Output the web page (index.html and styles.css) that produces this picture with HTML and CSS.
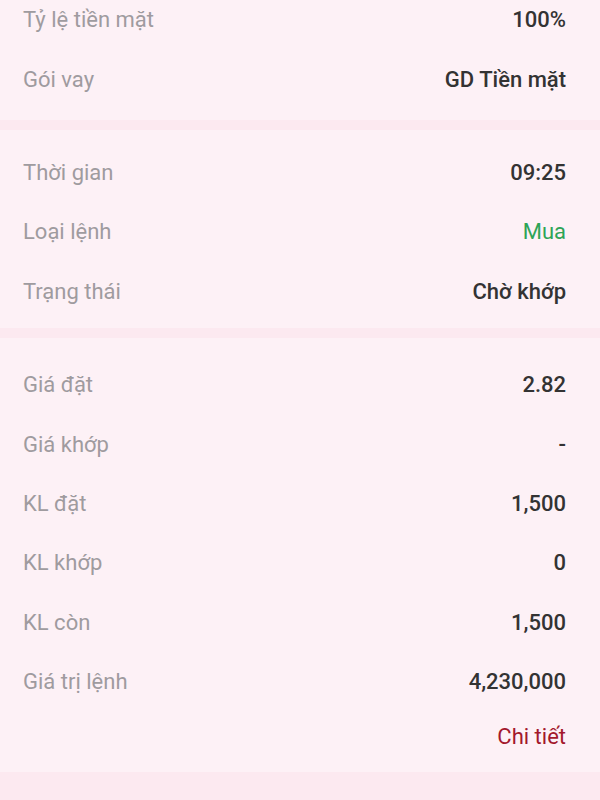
FILE: index.html
```html
<!DOCTYPE html>
<html lang="vi">
<head>
    <meta charset="UTF-8">
    <meta name="viewport" content="width=device-width, initial-scale=1.0">
    <title>Chi tiết lệnh</title>
    <link rel="stylesheet" href="styles.css">
</head>
<body>
    <div class="order">
        <section class="group group-top">
            <div class="row"><span class="label">Tỷ lệ tiền mặt</span><span class="value">100%</span></div>
            <div class="row"><span class="label">Gói vay</span><span class="value">GD Tiền mặt</span></div>
        </section>

        <section class="group group-mid">
            <div class="row"><span class="label">Thời gian</span><span class="value">09:25</span></div>
            <div class="row"><span class="label">Loại lệnh</span><span class="value buy">Mua</span></div>
            <div class="row"><span class="label">Trạng thái</span><span class="value">Chờ khớp</span></div>
        </section>

        <section class="group group-bottom">
            <div class="row"><span class="label">Giá đặt</span><span class="value">2.82</span></div>
            <div class="row"><span class="label">Giá khớp</span><span class="value">-</span></div>
            <div class="row"><span class="label">KL đặt</span><span class="value">1,500</span></div>
            <div class="row"><span class="label">KL khớp</span><span class="value">0</span></div>
            <div class="row"><span class="label">KL còn</span><span class="value">1,500</span></div>
            <div class="row"><span class="label">Giá trị lệnh</span><span class="value">4,230,000</span></div>
            <div class="more"><a href="#" class="detail-link">Chi tiết</a></div>
        </section>
    </div>
</body>
</html>
```

FILE: styles.css
```css
body {
    margin: 0;
    background-color: #fce9f0;
    font-family: Roboto, "Noto Sans", sans-serif;
    font-size: 22px;
    overflow: hidden;
}
.order {
    display: flex;
    flex-direction: column;
    gap: 10px;
}
.group {
    background-color: #fdf1f6;
    padding: 0 34px 0 23px;
}
.group-top {
    margin-top: -10px;
    padding-bottom: 11px;
}
.group-mid {
    padding-top: 13px;
    padding-bottom: 7px;
}
.group-bottom {
    padding-top: 17px;
    padding-bottom: 10px;
}
.row {
    height: 59.4px;
    display: flex;
    align-items: center;
    justify-content: space-between;
}
.label {
    color: #9f9b9f;
}
.value {
    color: #333333;
    font-weight: 500;
}
.value.buy {
    color: #2ea457;
    font-weight: 400;
}
.more {
    height: 51px;
    display: flex;
    align-items: center;
    justify-content: flex-end;
}
.detail-link {
    color: #a3182c;
    text-decoration: none;
}
```
